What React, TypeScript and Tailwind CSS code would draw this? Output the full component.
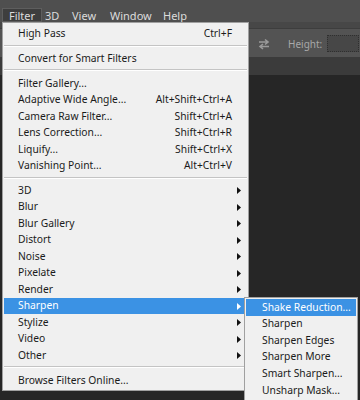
type Item = { label: string; shortcut?: string; sub?: boolean; active?: boolean } | 'sep';

const items: Item[] = [
  { label: 'High Pass', shortcut: 'Ctrl+F' },
  'sep',
  { label: 'Convert for Smart Filters' },
  'sep',
  { label: 'Filter Gallery...' },
  { label: 'Adaptive Wide Angle...', shortcut: 'Alt+Shift+Ctrl+A' },
  { label: 'Camera Raw Filter...', shortcut: 'Shift+Ctrl+A' },
  { label: 'Lens Correction...', shortcut: 'Shift+Ctrl+R' },
  { label: 'Liquify...', shortcut: 'Shift+Ctrl+X' },
  { label: 'Vanishing Point...', shortcut: 'Alt+Ctrl+V' },
  'sep',
  { label: '3D', sub: true },
  { label: 'Blur', sub: true },
  { label: 'Blur Gallery', sub: true },
  { label: 'Distort', sub: true },
  { label: 'Noise', sub: true },
  { label: 'Pixelate', sub: true },
  { label: 'Render', sub: true },
  { label: 'Sharpen', sub: true, active: true },
  { label: 'Stylize', sub: true },
  { label: 'Video', sub: true },
  { label: 'Other', sub: true },
  'sep',
  { label: 'Browse Filters Online...' },
];

const sharpen = ['Shake Reduction...', 'Sharpen', 'Sharpen Edges', 'Sharpen More', 'Smart Sharpen...', 'Unsharp Mask...'];

function Arrow({ white }: { white?: boolean }) {
  return (
    <svg width="4" height="7" viewBox="0 0 4 7" className="shrink-0">
      <path d="M0 0 L4 3.5 L0 7 Z" fill={white ? '#ffffff' : '#111111'} />
    </svg>
  );
}

export default function App() {
  return (
    <div
      className="relative w-[360px] h-[400px] overflow-hidden bg-[#262626] text-[10.3px]"
      style={{ fontFamily: '"Noto Sans", "Open Sans", sans-serif' }}
    >
      {/* menu bar */}
      <div className="h-[22px] bg-[#4f4f4f] flex items-end text-[11px] text-[#dcdcdc] pl-[2px]">
        <div className="h-[14px] w-[40px] shrink-0 bg-[#3e3e3e] border border-[#5e5e5e] flex items-center justify-center leading-none">Filter</div>
        <div className="ml-[3px] w-[27px] shrink-0 h-[14px] flex items-center leading-none">3D</div>
        <div className="w-[38px] shrink-0 h-[14px] flex items-center leading-none">View</div>
        <div className="w-[53px] shrink-0 h-[14px] flex items-center leading-none">Window</div>
        <div className="h-[14px] flex items-center leading-none">Help</div>
      </div>
      <div className="h-[6px] bg-[#474747]" />
      {/* options bar */}
      <div className="h-[29px] bg-[#535353] border-t border-[#3d3d3d] flex items-center pl-[257px]">
        <svg width="14" height="12" viewBox="0 0 14 12" className="mt-[2px]">
          <path d="M2 4 H11 M8 1.5 L11 4 L8 6.5" stroke="#9a9a9a" strokeWidth="1.6" fill="none" />
          <path d="M12 8.5 H3 M6 6 L3 8.5 L6 11" stroke="#9a9a9a" strokeWidth="1.6" fill="none" />
        </svg>
        <span className="ml-[17px] text-[10px] text-[#a8a8a8] mt-[2px]">Height:</span>
        <div className="ml-[5px] w-[32px] h-[17px] bg-[#474747] border border-dotted border-[#2f2f2f]" />
      </div>
      <div className="h-[18px] bg-[#3b3b3b]" />

      {/* Filter menu */}
      <div className="absolute left-[2px] top-[22px] w-[247px] bg-[#f0f0f0] border border-[#a0a0a0] text-[#1b1b1b] pt-[2.5px] pb-[1px]">
        {items.map((it, i) =>
          it === 'sep' ? (
            <div key={i} className="h-[8.3px] pt-[2.5px]">
              <div className="h-px bg-[#c4c4c4] mx-[1px]" />
              <div className="h-px bg-white mx-[1px]" />
            </div>
          ) : (
            <div
              key={i}
              className={`h-[16.5px] flex items-center pl-[14px] pr-[6px] mx-[1px] ${it.active ? 'bg-[#3b92e4] text-white' : ''}`}
            >
              <span className="flex-1 whitespace-nowrap">{it.label}</span>
              {it.shortcut && <span className="mr-[9px] whitespace-nowrap">{it.shortcut}</span>}
              {it.sub && <Arrow white={it.active} />}
            </div>
          )
        )}
      </div>

      {/* Sharpen submenu */}
      <div className="absolute left-[244px] top-[297px] w-[114px] h-[110px] bg-[#f0f0f0] border border-[#a0a0a0] text-[#1b1b1b] pt-[1px]">
        {sharpen.map((s, i) => (
          <div
            key={s}
            className={`h-[16.6px] flex items-center pl-[16px] mx-[1px] whitespace-nowrap ${i === 0 ? 'bg-[#3b92e4] text-white' : ''}`}
          >
            {s}
          </div>
        ))}
      </div>
    </div>
  );
}
